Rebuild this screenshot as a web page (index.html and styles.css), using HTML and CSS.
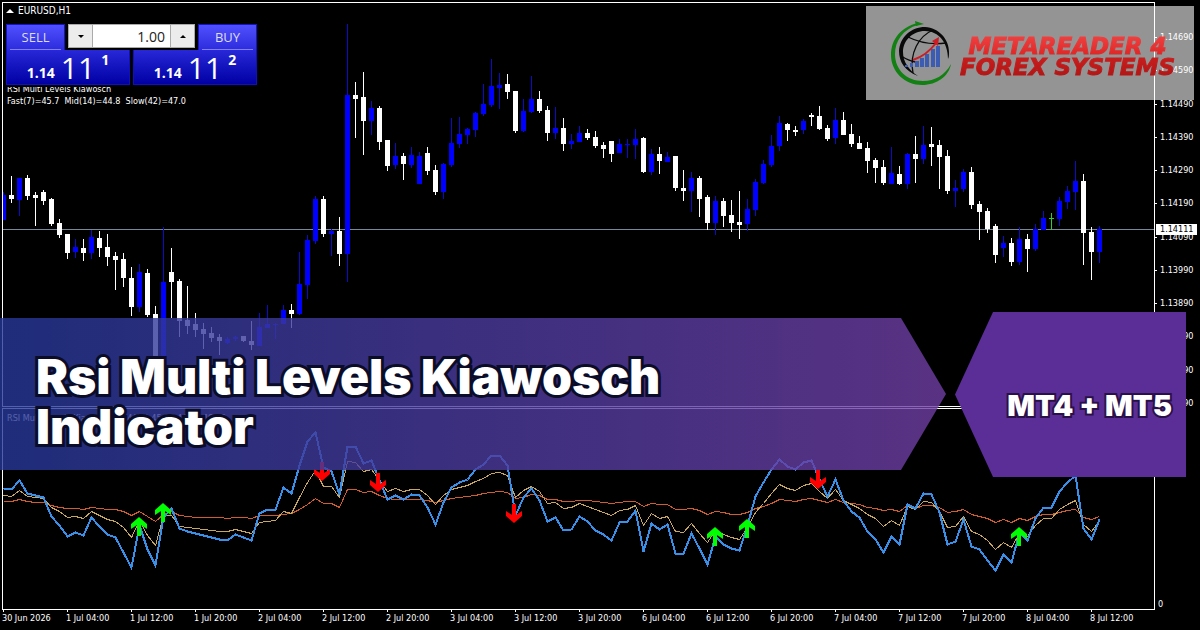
FILE: index.html
```html
<!DOCTYPE html>
<html lang="en">
  <head>
    <meta charset="UTF-8" />
    <meta name="viewport" content="width=device-width, initial-scale=1.0" />
    <title>Rsi Multi Levels Kiawosch Indicator</title>
    <link rel="stylesheet" href="styles.css">
  </head>
  <body>
    <div class="terminal">
      <section class="panel price-panel">
        <svg class="plot" id="candles"></svg>
        <div class="symbol"><span class="symbol-arrow"></span>EURUSD,H1</div>
        <form class="trade">
          <div class="trade-top">
            <button type="button" class="side">SELL</button>
            <div class="stepper">
              <button type="button" class="step down" aria-label="Decrease volume"></button>
              <input class="volume" type="text" value="1.00" aria-label="Volume" />
              <button type="button" class="step up" aria-label="Increase volume"></button>
            </div>
            <button type="button" class="side">BUY</button>
          </div>
          <div class="trade-quotes">
            <button type="button" class="quote">
              <span class="quote-base">1.14</span>
              <span class="quote-pips">11</span>
              <span class="quote-point">1</span>
            </button>
            <button type="button" class="quote">
              <span class="quote-base">1.14</span>
              <span class="quote-pips">11</span>
              <span class="quote-point">2</span>
            </button>
          </div>
        </form>
        <p class="comment">RSI Multi Levels Kiawosch</p>
        <p class="comment">Fast(7)=45.7&nbsp; Mid(14)=44.8&nbsp; Slow(42)=47.0</p>
      </section>

      <div class="scale price-scale">
        <span>1.14690</span>
        <span>1.14590</span>
        <span>1.14490</span>
        <span>1.14390</span>
        <span>1.14290</span>
        <span>1.14190</span>
        <span>1.14090</span>
        <span>1.13990</span>
        <span>1.13890</span>
        <span>1.13790</span>
        <span>1.13690</span>
        <span>1.13590</span>
        <b class="last-price">1.14111</b>
      </div>

      <section class="panel rsi-panel">
        <svg class="plot" id="rsi"></svg>
        <p class="comment">RSI Multi Levels Kiawosch(7/14/42) 45.66 44.82 46.98</p>
      </section>

      <div class="scale rsi-scale"><span>0</span></div>

      <div class="times">
        <span>30 Jun 2026</span>
        <span>1 Jul 04:00</span>
        <span>1 Jul 12:00</span>
        <span>1 Jul 20:00</span>
        <span>2 Jul 04:00</span>
        <span>2 Jul 12:00</span>
        <span>2 Jul 20:00</span>
        <span>3 Jul 04:00</span>
        <span>3 Jul 12:00</span>
        <span>3 Jul 20:00</span>
        <span>6 Jul 04:00</span>
        <span>6 Jul 12:00</span>
        <span>6 Jul 20:00</span>
        <span>7 Jul 04:00</span>
        <span>7 Jul 12:00</span>
        <span>7 Jul 20:00</span>
        <span>8 Jul 04:00</span>
        <span>8 Jul 12:00</span>
      </div>
    </div>

    <div class="logo">
      <svg class="logo-mark" width="66" height="68" viewBox="0 0 66 68">
        <path fill="#128012" d="M29 4C12 8 2 20 2 36c0 17 14 30 31 30 15 0 27-9 29-21-6 11-16 17-28 17C18 62 6 51 6 35 6 22 14 10 29 6z" />
        <path fill="#128012" d="M26 2l9 3-8 2z" />
        <path fill="#0a0a0a" d="M29 57C16 52 10 43 10 32 11 18 22 8 36 8c14 1 24 12 24 25 0 3 0 5-1 7 0-16-9-28-23-28-13 0-22 10-22 21 0 10 6 18 15 24z" />
        <g fill="none" stroke="#0a0a0a" stroke-width="1.3">
          <path d="M44 11C30 17 20 34 24 54" />
          <path d="M19 18c10 5 24 8 38 6" />
          <path d="M12 37c5 3 9 5 14 6" />
        </g>
        <g fill="#3c5cb4">
          <path d="M16 46h3v2h-3zM21 44h3v4h-3z" />
          <path d="M26 42h4v6h-4zM31 39h4v9h-4zM36 35h4v13h-4zM42 30h4v18h-4zM47 27h4v21h-4z" />
        </g>
        <path fill="none" stroke="#cc1c24" stroke-width="2" d="M24 41c9-3 17-9 23-17" />
        <path fill="#cc1c24" d="M50 18l-1 9-6-5z" />
      </svg>
      <div class="logo-text">
        <span class="logo-line light">METAREADER 4</span>
        <span class="logo-line">FOREX SYSTEMS</span>
      </div>
    </div>

    <div class="banner">
      <h1>Rsi Multi Levels Kiawosch Indicator</h1>
    </div>
    <div class="badge">MT4 + MT5</div>

    <script src="script.js"></script>
  </body>
</html>
```
FILE: styles.css
```css
* {
  box-sizing: border-box;
}
body {
  margin: 0;
  position: relative;
  background-color: #000;
  color: #fff;
  font-family: "DejaVu Sans Condensed", "Noto Sans", sans-serif;
  font-size: 9px;
  line-height: 12px;
}
p {
  margin: 0;
}
button,
input {
  font-family: "Open Sans", sans-serif;
  border: 0;
  padding: 0;
  margin: 0;
}

/* chart window */
.terminal {
  display: grid;
  grid-template-columns: 1fr 45px;
  grid-template-rows: 405fr 202fr 19px;
  row-gap: 1px;
  min-height: 100vh;
  padding: 2px 0 0 2px;
}
.panel {
  position: relative;
  border: 1px solid #fff;
  padding-left: 4px;
  overflow: hidden;
}
.rsi-panel {
  padding-top: 3px;
}
.plot {
  position: absolute;
  inset: 0;
  width: 100%;
  height: 100%;
}
.symbol,
.trade,
.comment {
  position: relative;
}
.symbol {
  display: flex;
  align-items: center;
  gap: 4px;
  height: 16px;
  margin-left: -1px;
  font-size: 10px;
}
.symbol-arrow {
  border: 4px solid transparent;
  border-top: 0;
  border-bottom-color: #fff;
}

/* one click trading */
.trade {
  width: 251px;
  height: 68px;
  padding-top: 5px;
  margin: 0 0 -4px -1px;
  background-color: #000;
  z-index: 1;
}
.trade-top {
  display: flex;
  justify-content: space-between;
  align-items: flex-start;
}
.side {
  position: relative;
  width: 59px;
  height: 26px;
  padding-bottom: 2px;
  color: #dde;
  font-size: 13px;
  background: linear-gradient(#5050ff, #2c2cdc);
  border: 1px solid #1414c0;
  border-bottom: 0;
}
.side::after {
  content: "";
  position: absolute;
  left: 3px;
  right: 3px;
  bottom: 0;
  height: 1px;
  background-color: #8080ff;
}
.stepper {
  display: flex;
  width: 127px;
  height: 24px;
  border: 1px solid #aaa;
}
.step {
  width: 23px;
  background-color: #ececec;
  display: flex;
  align-items: center;
  justify-content: center;
}
.step::before {
  content: "";
  border: 3px solid transparent;
}
.step.down::before {
  border-top-color: #000;
  border-bottom: 0;
}
.step.up::before {
  border-bottom-color: #000;
  border-top: 0;
}
.volume {
  flex: 1;
  min-width: 0;
  padding-right: 5px;
  border: solid #aaa;
  border-width: 0 1px;
  text-align: right;
  font-size: 14px;
  color: #222;
  background-color: #fff;
}
.trade-quotes {
  display: flex;
  gap: 3px;
}
.quote {
  flex: 1;
  display: flex;
  justify-content: center;
  align-items: flex-end;
  gap: 6px;
  height: 35px;
  padding-bottom: 4px;
  color: #fff;
  background: linear-gradient(#2828d8, #0000a4);
  border: solid #1010c0;
  border-width: 0 1px 1px;
}
.quote-base,
.quote-point {
  font-size: 14px;
  line-height: 14px;
  font-weight: bold;
}
.quote-pips {
  font-size: 30px;
  line-height: 24px;
}
.quote-point {
  align-self: flex-start;
  padding-top: 3px;
}

/* scales */
.scale {
  position: relative;
  display: flex;
  flex-direction: column;
  margin-left: -1px;
  padding-left: 6px;
}
.scale span {
  position: relative;
}
.price-scale {
  justify-content: space-between;
  padding-top: 29px;
  margin-bottom: -2px;
}
.price-scale span::before {
  content: "";
  position: absolute;
  left: -5px;
  top: 6px;
  width: 2px;
  height: 1px;
  background-color: #fff;
}
.last-price {
  position: absolute;
  top: 222px;
  left: 2px;
  width: 41px;
  padding-left: 4px;
  line-height: 11px;
  font-weight: normal;
  color: #000;
  background-color: #fff;
}
.rsi-scale {
  justify-content: flex-end;
  padding-left: 4px;
}
.times {
  grid-column: 1 / -1;
  display: flex;
  margin-top: -2px;
}
.times span {
  flex: 0 0 64px;
  position: relative;
  padding-top: 3px;
  white-space: nowrap;
}
.times span::before {
  content: "";
  position: absolute;
  left: 1px;
  top: 0;
  width: 1px;
  height: 3px;
  background-color: #fff;
}

/* drawings */
.bid-line {
  fill: #778899;
}
.bull {
  fill: #00f;
}
.bull.wick {
  fill: #0c0cc4;
}
.bear {
  fill: #fff;
}
.doji {
  fill: #3c3;
}
.line {
  fill: none;
  stroke-width: 1;
}
.fast {
  stroke: #3a8fe8;
  stroke-width: 2;
}
.mid {
  stroke: #c8a860;
}
.slow {
  stroke: #d05c30;
}
.buy-signal {
  fill: #0f0;
}
.sell-signal {
  fill: #f00;
}

/* logo */
.logo {
  position: absolute;
  top: 6px;
  right: 6px;
  width: 328px;
  height: 94px;
  padding-left: 23px;
  display: flex;
  align-items: center;
  background-color: rgba(255, 255, 255, 0.58);
}
.logo-text {
  display: flex;
  flex-direction: column;
  align-items: center;
  flex: 1;
  padding: 8px 14px 0 0;
}
.logo-line {
  font: italic bold 23px/21px "DejaVu Sans", sans-serif;
  white-space: nowrap;
  color: transparent;
  background: linear-gradient(#c81e1e, #b01414);
  background-clip: text;
  -webkit-background-clip: text;
  -webkit-text-stroke: 1px transparent;
  padding: 0 3px;
}
.logo-line.light {
  background-image: linear-gradient(#f04040, #dc2424);
}

/* title banner */
.banner,
.badge {
  position: absolute;
  font-family: Inter, "Liberation Sans", sans-serif;
  font-weight: 900;
  paint-order: stroke fill;
}
.banner {
  top: 318px;
  left: 0;
  width: calc(100% - 254px);
  padding: 34px 240px 18px 36px;
  background: linear-gradient(90deg, rgba(38, 56, 152, 0.8), rgba(112, 62, 164, 0.8));
  clip-path: polygon(0 0, calc(100% - 45px) 0, 100% 50%, calc(100% - 45px) 100%, 0 100%);
}
.banner h1 {
  margin: 0;
  font-size: 48px;
  line-height: 50px;
  font-weight: 900;
  -webkit-text-stroke: 6px #0a0c28;
}
.badge {
  top: 312px;
  right: 14px;
  width: 231px;
  height: 165px;
  padding: 22px 14px 0 0;
  display: flex;
  align-items: center;
  justify-content: flex-end;
  font-size: 29px;
  background-color: #5a2e96;
  clip-path: polygon(38px 0, 100% 0, 100% 100%, 38px 100%, 0 50%);
  -webkit-text-stroke: 4px #2a1048;
}
```
FILE: script.js
```js
const STEP = 8;
const PRICE_TOP = 3;
const RSI_TOP = 409;
const BID = 229;

// kind, high, body top, body bottom, low
const candles = `
u 192 195 220 220|d 176 195 199 203|u 178 178 200 216|d 175 178 196 200|d 192 195 198 226|d 190 192 201 205
d 198 199 224 226|d 219 223 235 238|d 234 234 253 259|u 239 247 252 258|d 239 248 253 261|u 230 237 253 259
d 231 238 248 257|d 234 247 257 266|d 252 256 260 290|d 253 259 278 287|d 267 278 307 316|u 264 272 307 312
d 269 273 315 317|d 306 314 358 358|u 227 282 357 357|d 248 272 282 318|d 279 281 321 337|d 286 320 326 334
d 313 324 330 337|d 323 329 334 349|d 327 333 338 342|d 334 337 341 355|u 337 339 343 344|u 336 337 339 341
d 336 336 341 342|d 321 341 345 350|u 313 327 346 346|u 305 324 328 328|u 323 324 325 339|u 305 310 324 324
d 304 310 314 328|u 252 284 314 315|u 235 240 285 299|u 196 199 241 244|d 196 199 234 237|u 229 231 234 256
d 217 231 254 266|u 24 95 254 282|d 82 95 99 138|d 72 97 121 155|u 101 108 121 135|d 106 108 142 150
d 140 140 166 171|u 143 156 165 169|d 153 156 164 180|u 147 155 165 168|u 152 156 184 184|d 147 153 171 175
d 165 170 192 195|u 163 164 192 199|u 118 143 165 167|u 117 134 144 148|u 128 129 135 144|u 112 113 130 137
u 84 104 114 116|u 59 86 105 107|u 73 85 88 109|d 74 84 92 99|d 91 91 131 133|u 99 111 131 132
u 76 99 112 113|d 91 99 111 113|d 106 110 133 141|u 107 128 133 139|d 118 128 144 151|u 134 141 144 149
u 126 133 142 142|d 129 133 138 140|d 131 137 146 148|d 142 145 149 158|d 141 141 154 162|u 139 144 153 153
u 139 144 145 158|u 129 139 145 159|d 137 138 172 173|u 149 154 172 175|d 147 154 161 174|u 152 157 162 162
d 156 156 188 191|d 170 188 191 201|u 172 178 191 212|d 176 178 199 217|d 195 197 223 230|u 196 201 223 235
d 198 201 216 227|d 200 215 223 232|d 191 222 225 239|u 199 209 224 231|u 179 182 210 216|u 160 164 183 184
u 135 146 165 167|u 116 123 146 151|d 123 124 130 141|d 126 130 132 136|u 119 121 130 134|d 113 115 117 126
d 106 116 129 130|d 125 128 139 141|u 108 120 138 144|d 112 120 135 135|d 124 134 144 147|d 136 143 149 149
d 142 148 161 173|d 158 160 168 183|d 160 167 183 185|u 147 173 184 184|d 166 174 184 185|u 153 154 184 189
d 136 154 159 183|u 126 145 159 164|d 127 144 147 166|d 140 145 157 189|d 150 156 191 194|u 180 188 191 207
u 169 172 189 192|d 167 172 205 209|d 201 204 212 240|d 208 211 229 233|d 224 226 255 263|u 236 243 248 257
d 238 243 262 266|u 227 239 262 265|d 234 239 249 272|u 224 229 249 251|u 211 218 230 230|x 213 218 219 230
u 197 201 219 226|u 186 191 202 209|u 161 181 192 210|d 174 181 233 265|d 227 232 252 280|u 226 229 252 263`
  .trim()
  .split(/[|\n]/);

const lines = {
  slow: [
    501, 501, 499, 501, 502, 502, 505, 507, 508, 508, 509, 507, 508, 509, 509, 511, 515, 511, 516, 521, 514, 511, 515,
    516, 517, 517, 517, 517, 518, 517, 517, 518, 515, 515, 515, 514, 513, 509, 504, 498, 503, 503, 507, 489, 489, 492,
    491, 495, 498, 499, 499, 499, 499, 500, 502, 500, 498, 497, 496, 495, 493, 492, 491, 492, 498, 497, 494, 495, 499,
    499, 501, 501, 500, 500, 501, 502, 503, 502, 501, 501, 506, 503, 504, 504, 509, 509, 508, 510, 514, 511, 512, 514,
    514, 512, 508, 506, 503, 499, 500, 501, 499, 498, 500, 502, 499, 502, 503, 504, 507, 508, 510, 509, 511, 505, 508,
    505, 505, 507, 512, 511, 509, 514, 516, 518, 522, 519, 522, 518, 520, 516, 514, 514, 512, 510, 509, 517, 519, 516,
  ],
  mid: [
    495, 496, 490, 496, 497, 498, 507, 511, 517, 516, 518, 511, 515, 519, 521, 527, 537, 520, 535, 545, 515, 515, 526,
    527, 528, 529, 530, 531, 531, 529, 531, 533, 522, 521, 520, 511, 513, 497, 482, 470, 486, 486, 497, 461, 462, 471,
    469, 480, 491, 488, 491, 489, 489, 495, 504, 495, 489, 487, 485, 481, 478, 473, 472, 475, 497, 490, 486, 491, 503,
    502, 508, 507, 503, 506, 509, 512, 515, 510, 509, 505, 525, 513, 518, 516, 531, 532, 523, 533, 542, 530, 534, 537,
    539, 527, 512, 503, 493, 484, 488, 490, 485, 483, 491, 498, 489, 500, 504, 508, 514, 518, 526, 520, 525, 506, 509,
    501, 502, 511, 527, 526, 516, 531, 534, 540, 549, 542, 547, 533, 536, 525, 518, 518, 509, 504, 500, 524, 531, 520,
  ],
  fast: [
    488, 489, 480, 493, 495, 497, 516, 525, 536, 532, 535, 517, 526, 534, 537, 552, 567, 525, 549, 565, 517, 508, 528,
    531, 533, 535, 537, 539, 540, 534, 537, 540, 513, 509, 509, 487, 493, 465, 441, 432, 467, 471, 494, 446, 446, 463,
    460, 480, 499, 495, 499, 494, 495, 507, 524, 502, 487, 482, 479, 469, 464, 455, 455, 465, 515, 497, 488, 500, 521,
    517, 530, 529, 516, 521, 530, 534, 540, 522, 521, 510, 551, 523, 529, 524, 553, 553, 533, 548, 564, 536, 544, 548,
    550, 525, 496, 482, 469, 459, 466, 469, 462, 460, 479, 496, 479, 500, 511, 517, 531, 539, 552, 536, 544, 504, 508,
    493, 494, 512, 544, 541, 519, 546, 549, 560, 570, 554, 562, 532, 540, 518, 507, 507, 491, 482, 475, 528, 539, 519,
  ],
};

const buySignals = [[139, 517], [163, 503], [715, 527], [747, 519], [1019, 527]];
const sellSignals = [[322, 480], [378, 491], [514, 522], [818, 488]];

function add(parent, tag, attrs) {
  const el = document.createElementNS("http://www.w3.org/2000/svg", tag);
  for (const name in attrs) {
    el.setAttribute(name, attrs[name]);
  }
  parent.appendChild(el);
}

function drawCandles(svg) {
  const names = { u: "bull", d: "bear", x: "doji" };
  add(svg, "rect", { class: "bid-line", x: 0, y: BID - PRICE_TOP, width: "100%", height: 1 });
  candles.forEach((row, i) => {
    const [kind, ...values] = row.split(" ");
    const [high, top, bottom, low] = values.map((v) => v - PRICE_TOP);
    const x = i * STEP;
    add(svg, "rect", { class: names[kind] + " wick", x, y: high, width: 1, height: low - high });
    add(svg, "rect", { class: names[kind], x: x - 2, y: top, width: 5, height: bottom - top });
  });
}

function drawRsi(svg) {
  for (const name in lines) {
    const points = lines[name].map((y, i) => `${i * STEP + 0.5},${y - RSI_TOP + 0.5}`).join(" ");
    add(svg, "polyline", { class: "line " + name, points, "shape-rendering": "crispEdges" });
  }
  const arrow = "M0 0L8 7V12L2 8V19H-2V8L-8 12V7Z";
  buySignals.forEach(([x, y]) => {
    add(svg, "path", { class: "buy-signal", d: arrow, transform: `translate(${x - 3} ${y - RSI_TOP})` });
  });
  sellSignals.forEach(([x, y]) => {
    add(svg, "path", { class: "sell-signal", d: arrow, transform: `translate(${x - 3} ${y - RSI_TOP + 1}) scale(1 -1)` });
  });
}

drawCandles(document.getElementById("candles"));
drawRsi(document.getElementById("rsi"));
```
